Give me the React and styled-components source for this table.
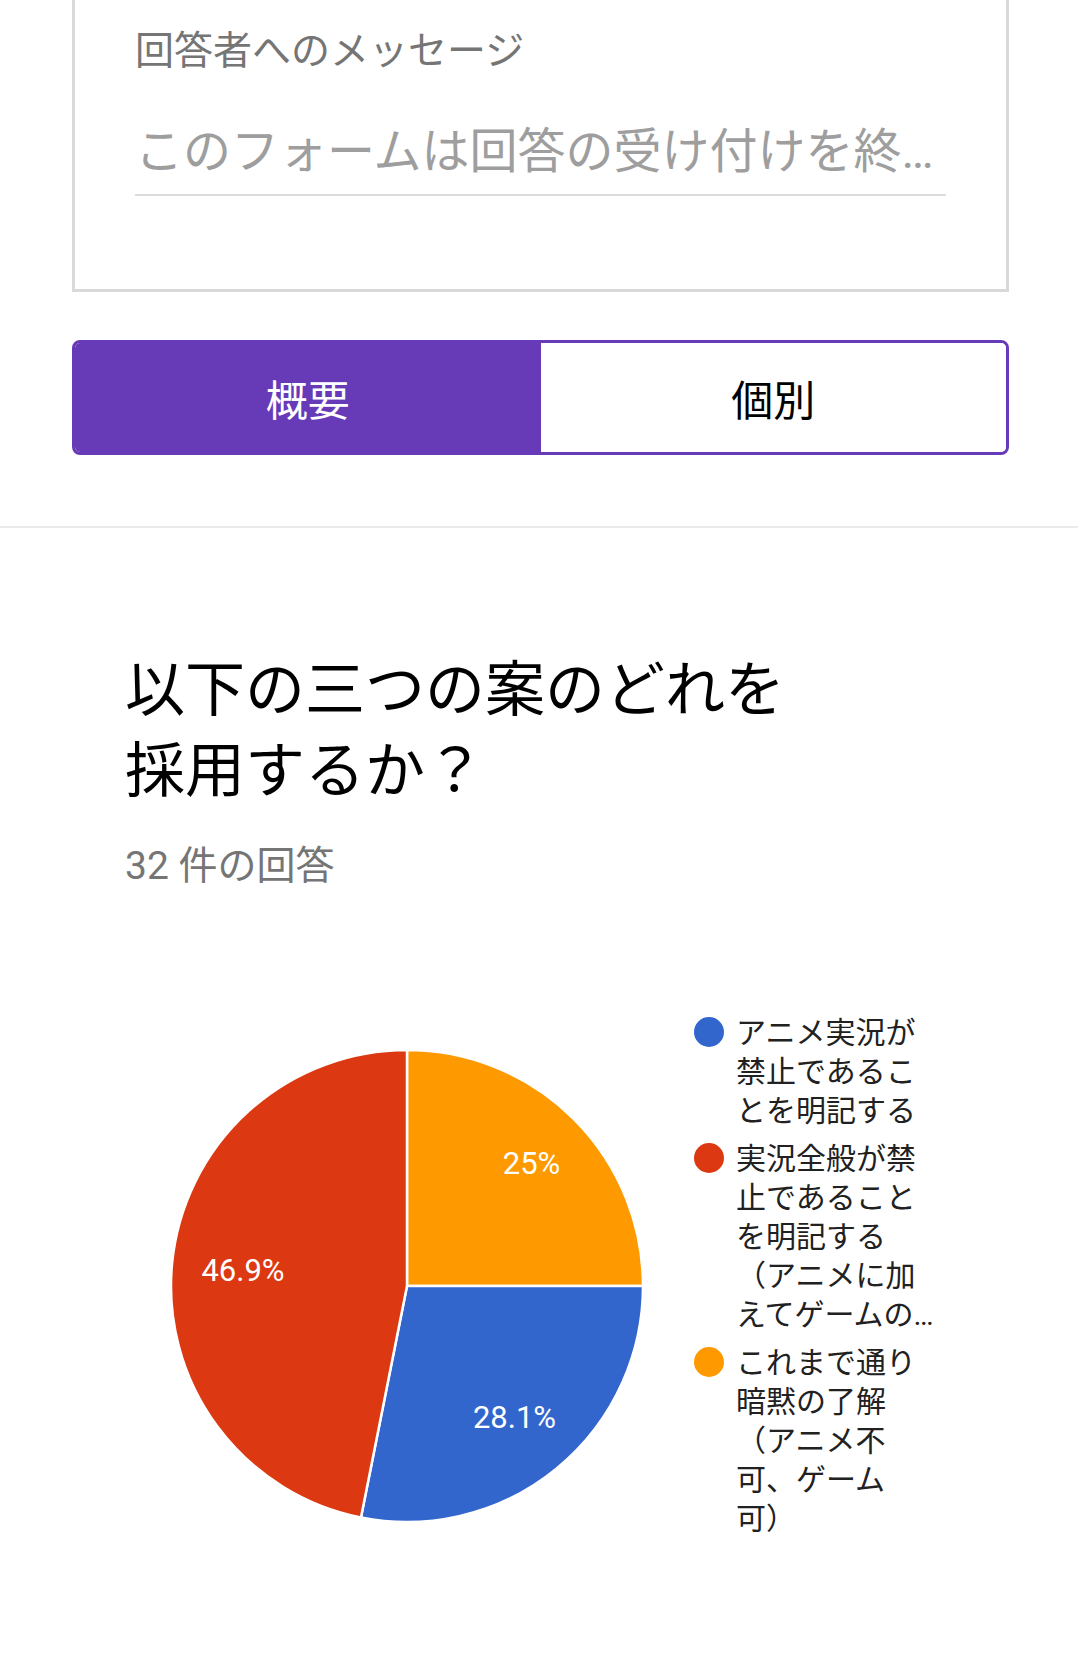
import React from 'react';
import styled, { createGlobalStyle } from 'styled-components';

const Global = createGlobalStyle`
  html, body { margin: 0; padding: 0; background: #fff; }
  body {
    font-family: Roboto, "Noto Sans CJK JP", sans-serif;
    -webkit-font-smoothing: antialiased;
    text-spacing-trim: space-all;
  }
  * { box-sizing: border-box; }
`;

const Page = styled.div`
  width: 1078px;
  min-height: 1654px;
  background: #fff;
`;

const TopSection = styled.section`
  padding: 0 69px 71px 72px;
  border-bottom: 2px solid #ebebeb;
`;

const MessageCard = styled.div`
  border: 3px solid #d9d9d9;
  border-top: none;
  padding: 28px 60px 93px 60px;
  background: #fff;
`;

const FieldLabel = styled.div`
  font-size: 39px;
  line-height: 46px;
  color: #757575;
`;

const FieldInput = styled.div`
  margin-top: 48px;
  font-size: 48px;
  line-height: 60px;
  color: #9e9e9e;
  padding-bottom: 12px;
  border-bottom: 2px solid #dcdcdc;
  white-space: nowrap;
  overflow: hidden;
  text-overflow: ellipsis;
`;

const Tabs = styled.div`
  margin-top: 48px;
  height: 115px;
  display: grid;
  grid-template-columns: 1fr 1fr;
  border: 3px solid #673ab7;
  border-radius: 8px;
  overflow: hidden;
`;

const Tab = styled.div`
  display: flex;
  align-items: center;
  justify-content: center;
  font-size: 42px;
  background: ${p => (p.$active ? '#673ab7' : '#fff')};
  color: ${p => (p.$active ? '#fff' : '#000')};
`;

const Summary = styled.section`
  padding-top: 122px;
`;

const QuestionHeader = styled.div`
  padding-left: 125px;
`;

const QuestionTitle = styled.h2`
  margin: 0;
  width: 700px;
  font-size: 60px;
  line-height: 81px;
  font-weight: 400;
  color: #000;
`;

const ResponseCount = styled.div`
  margin-top: 31px;
  font-size: 39px;
  line-height: 46px;
  color: #757575;
`;

const ChartRow = styled.div`
  margin-top: 124px;
  padding-left: 170px;
  display: flex;
  align-items: flex-start;
  gap: 50px;
`;

const PieSvg = styled.svg`
  flex: none;
  margin-top: 36px;
  display: block;
`;

const SliceLabel = styled.text`
  font-family: Roboto, sans-serif;
  font-size: 31px;
  fill: #fff;
`;

const Legend = styled.ul`
  margin: 0;
  padding: 0;
  list-style: none;
  display: flex;
  flex-direction: column;
  gap: 9px;
`;

const LegendItem = styled.li`
  display: flex;
  align-items: flex-start;
  gap: 12px;
`;

const Dot = styled.span`
  flex: none;
  width: 30px;
  height: 30px;
  margin-top: 4px;
  border-radius: 50%;
  background: ${p => p.$color};
`;

const LegendText = styled.span`
  width: 205px;
  font-size: 30px;
  line-height: 39px;
  color: #212121;
  display: -webkit-box;
  -webkit-box-orient: vertical;
  -webkit-line-clamp: 5;
  overflow: hidden;
`;

const R = 236;
const C = 237;

const slices = [
  { label: '25%', value: 8, color: '#ff9900', lx: 361.5, ly: 114 },
  { label: '28.1%', value: 9, color: '#3366cc', lx: 344.5, ly: 368 },
  { label: '46.9%', value: 15, color: '#dc3912', lx: 73, ly: 221.5 },
];

const legend = [
  { color: '#3366cc', text: 'アニメ実況が禁止であることを明記する' },
  { color: '#dc3912', text: '実況全般が禁止であることを明記する（アニメに加えてゲームの実況も禁止）' },
  { color: '#ff9900', text: 'これまで通り暗黙の了解（アニメ不可、ゲーム可）' },
];

const pt = a => [C + R * Math.sin(a), C - R * Math.cos(a)];

function Pie() {
  const total = slices.reduce((s, x) => s + x.value, 0);
  let start = 0;
  const paths = slices.map(s => {
    const end = start + (s.value / total) * Math.PI * 2;
    const [x1, y1] = pt(start);
    const [x2, y2] = pt(end);
    const large = end - start > Math.PI ? 1 : 0;
    const d = `M${C},${C} L${x1},${y1} A${R},${R} 0 ${large} 1 ${x2},${y2} Z`;
    start = end;
    return { ...s, d };
  });
  return (
    <PieSvg width="474" height="474" viewBox="0 0 474 474">
      {paths.map(p => (
        <path key={p.label} d={p.d} fill={p.color} stroke="#fff" strokeWidth="2.5" strokeLinejoin="round" />
      ))}
      {paths.map(p => (
        <SliceLabel key={p.label + 't'} x={p.lx} y={p.ly} textAnchor="middle" dominantBaseline="central">
          {p.label}
        </SliceLabel>
      ))}
    </PieSvg>
  );
}

export default function App() {
  return (
    <Page>
      <Global />
      <TopSection>
        <MessageCard>
          <FieldLabel>回答者へのメッセージ</FieldLabel>
          <FieldInput>このフォームは回答の受け付けを終了しました</FieldInput>
        </MessageCard>
        <Tabs>
          <Tab $active>概要</Tab>
          <Tab>個別</Tab>
        </Tabs>
      </TopSection>
      <Summary>
        <QuestionHeader>
          <QuestionTitle>以下の三つの案のどれを採用するか？</QuestionTitle>
          <ResponseCount>32 件の回答</ResponseCount>
        </QuestionHeader>
        <ChartRow>
          <Pie />
          <Legend>
            {legend.map(l => (
              <LegendItem key={l.text}>
                <Dot $color={l.color} />
                <LegendText>{l.text}</LegendText>
              </LegendItem>
            ))}
          </Legend>
        </ChartRow>
      </Summary>
    </Page>
  );
}
